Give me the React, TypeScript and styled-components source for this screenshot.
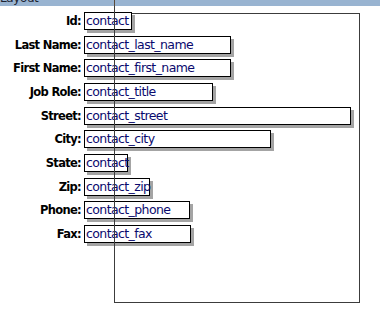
import React from "react";
import styled, { createGlobalStyle } from "styled-components";

const GlobalStyle = createGlobalStyle`
  html, body {
    margin: 0;
    padding: 0;
    background: #ffffff;
    overflow: hidden;
  }
`;

const Page = styled.div`
  position: relative;
  width: 380px;
  height: 316px;
  font-family: "DejaVu Sans", Verdana, sans-serif;
`;

const Header = styled.div`
  height: 6px;
  overflow: hidden;
  background: #99b4d1;
`;

const HeaderTitle = styled.span`
  display: block;
  margin-top: -9px;
  font-size: 12px;
  line-height: 14px;
  letter-spacing: -0.4px;
  color: #1c2230;
`;

const Canvas = styled.div`
  position: relative;
  height: 310px;
`;

// the layout part that the fields sit on
const Frame = styled.div`
  position: absolute;
  left: 114px;
  top: 7px;
  width: 246px;
  height: 290px;
  box-sizing: border-box;
  border: 1px solid #3c3c3c;
`;

// alignment guide drawn over everything
const Guide = styled.div`
  position: absolute;
  left: 114px;
  top: 0;
  width: 1px;
  height: 303px;
  background: linear-gradient(#5a4a38 0 6px, #3c3c3c 6px);
  z-index: 2;
`;

const Form = styled.div`
  position: relative;
  z-index: 1;
  display: grid;
  grid-template-columns: 84px auto;
  grid-auto-rows: 23.67px;
  align-items: start;
  justify-items: start;
  padding-top: 6px;
`;

const Label = styled.div`
  justify-self: end;
  padding-right: 3px;
  font-weight: bold;
  font-size: 11.5px;
  line-height: 18px;
  letter-spacing: -0.7px;
  color: #000000;
  white-space: nowrap;
`;

const Field = styled.div<{ $width: number }>`
  box-sizing: border-box;
  width: ${(p) => p.$width}px;
  height: 18px;
  border: 1px solid #000000;
  background: #ffffff;
  box-shadow: 3px 3px 0 #a4a4a4;
  padding-left: 1px;
  font-size: 12.5px;
  line-height: 16px;
  letter-spacing: -0.6px;
  color: #0a0a6e;
  white-space: nowrap;
`;

const fields = [
  { label: "Id", value: "contact", width: 48 },
  { label: "Last Name", value: "contact_last_name", width: 147 },
  { label: "First Name", value: "contact_first_name", width: 147 },
  { label: "Job Role", value: "contact_title", width: 129 },
  { label: "Street", value: "contact_street", width: 267 },
  { label: "City", value: "contact_city", width: 187 },
  { label: "State", value: "contact", width: 44 },
  { label: "Zip", value: "contact_zip", width: 66 },
  { label: "Phone", value: "contact_phone", width: 106 },
  { label: "Fax", value: "contact_fax", width: 107 },
];

const App: React.FC = () => {
  return (
    <>
      <GlobalStyle />
      <Page>
        <Header>
          <HeaderTitle>Layout</HeaderTitle>
        </Header>
        <Canvas>
          <Frame />
          <Form>
            {fields.map((f) => (
              <React.Fragment key={f.label}>
                <Label>{f.label}:</Label>
                <Field $width={f.width}>{f.value}</Field>
              </React.Fragment>
            ))}
          </Form>
        </Canvas>
        <Guide />
      </Page>
    </>
  );
};

export default App;
